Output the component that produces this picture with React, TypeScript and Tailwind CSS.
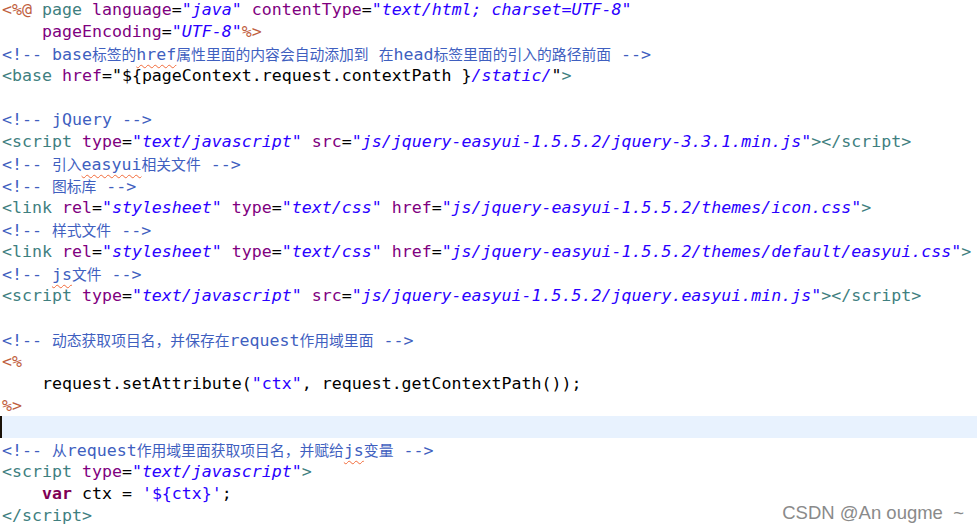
import type { ReactNode } from "react";

type Seg = [string, string];

const t = "text-[#3f7f7f]";
const a = "text-[#7f007f]";
const v = "text-[#2a00ff] italic";
const c = "text-[#3f5fbf]";
const j = "text-[#bf5f3f]";
const k = "text-[#7f0055] font-bold";
const s = "text-[#2a00ff]";
const p = "text-black";
const sq = "text-[#3f5fbf] underline decoration-wavy decoration-[#f26b3a] decoration-1 underline-offset-[4px]";

const lines: Seg[][] = [
  [["<%@", j], [" page", t], [" language", a], ["=", p], ['"java"', v], [" contentType", a], ["=", p], ['"text/html; charset=UTF-8"', v]],
  [["    pageEncoding", a], ["=", p], ['"UTF-8"', v], ["%>", j]],
  [["<!-- base标签的", c], ["href", sq], ["属性里面的内容会自动添加到 在head标签里面的引入的路径前面 -->", c]],
  [["<base", t], [" href", a], ["=", p], ['"${pageContext.request.contextPath }', p], ["/static/", v], ['"', p], [">", t]],
  [],
  [["<!-- jQuery -->", c]],
  [["<script", t], [" type", a], ["=", p], ['"text/javascript"', v], [" src", a], ["=", p], ['"js/jquery-easyui-1.5.5.2/jquery-3.3.1.min.js"', v], ["></script>", t]],
  [["<!-- 引入", c], ["easyui", sq], ["相关文件 -->", c]],
  [["<!-- 图标库 -->", c]],
  [["<link", t], [" rel", a], ["=", p], ['"stylesheet"', v], [" type", a], ["=", p], ['"text/css"', v], [" href", a], ["=", p], ['"js/jquery-easyui-1.5.5.2/themes/icon.css"', v], [">", t]],
  [["<!-- 样式文件 -->", c]],
  [["<link", t], [" rel", a], ["=", p], ['"stylesheet"', v], [" type", a], ["=", p], ['"text/css"', v], [" href", a], ["=", p], ['"js/jquery-easyui-1.5.5.2/themes/default/easyui.css"', v], [">", t]],
  [["<!-- ", c], ["js", sq], ["文件 -->", c]],
  [["<script", t], [" type", a], ["=", p], ['"text/javascript"', v], [" src", a], ["=", p], ['"js/jquery-easyui-1.5.5.2/jquery.easyui.min.js"', v], ["></script>", t]],
  [],
  [["<!-- 动态获取项目名，并保存在request作用域里面 -->", c]],
  [["<%", j]],
  [["    request.setAttribute(", p], ['"ctx"', s], [", request.getContextPath());", p]],
  [["%>", j]],
  [],
  [["<!-- 从request作用域里面获取项目名，并赋给", c], ["js", sq], ["变量 -->", c]],
  [["<script", t], [" type", a], ["=", p], ['"text/javascript"', v], [">", t]],
  [["    ", p], ["var", k], [" ctx = ", p], ["'${ctx}'", s], [";", p]],
  [["</script>", t]],
];

// CJK runs get a narrower font so they line up like the editor
function withCjk(text: string): ReactNode[] {
  return text.split(/([\u3000-\u9fff\uff00-\uffef]+)/).map((part, i) =>
    i % 2 === 1 ? (
      <span key={i} className="font-['Noto_Sans_CJK_SC',sans-serif] text-[14.8px] not-italic">
        {part}
      </span>
    ) : (
      part
    )
  );
}

export default function App() {
  return (
    <div className="relative w-[977px] h-[531px] overflow-hidden bg-white">
      <div className="mt-[-2px] font-['DejaVu_Sans_Mono',monospace] text-[16.6px] leading-[22px] whitespace-pre">
        {lines.map((segs, i) => {
          const current = i === 19;
          return (
            <div key={i} className={`h-[22px] flex items-stretch ${current ? "bg-[#e8f2fe]" : ""}`}>
              {current && <div className="w-[2px] bg-[#1a1208]" />}
              <div className="pl-[2px] pt-[1px]">
                {segs.map(([text, cls], n) => (
                  <span key={n} className={cls}>
                    {withCjk(text)}
                  </span>
                ))}
              </div>
            </div>
          );
        })}
      </div>
      <div className="absolute right-[13px] bottom-[4px] font-['Liberation_Sans',sans-serif] text-[18.5px] text-[#8a8a8a]">
        CSDN @An ougme&nbsp;&nbsp;~
      </div>
    </div>
  );
}
